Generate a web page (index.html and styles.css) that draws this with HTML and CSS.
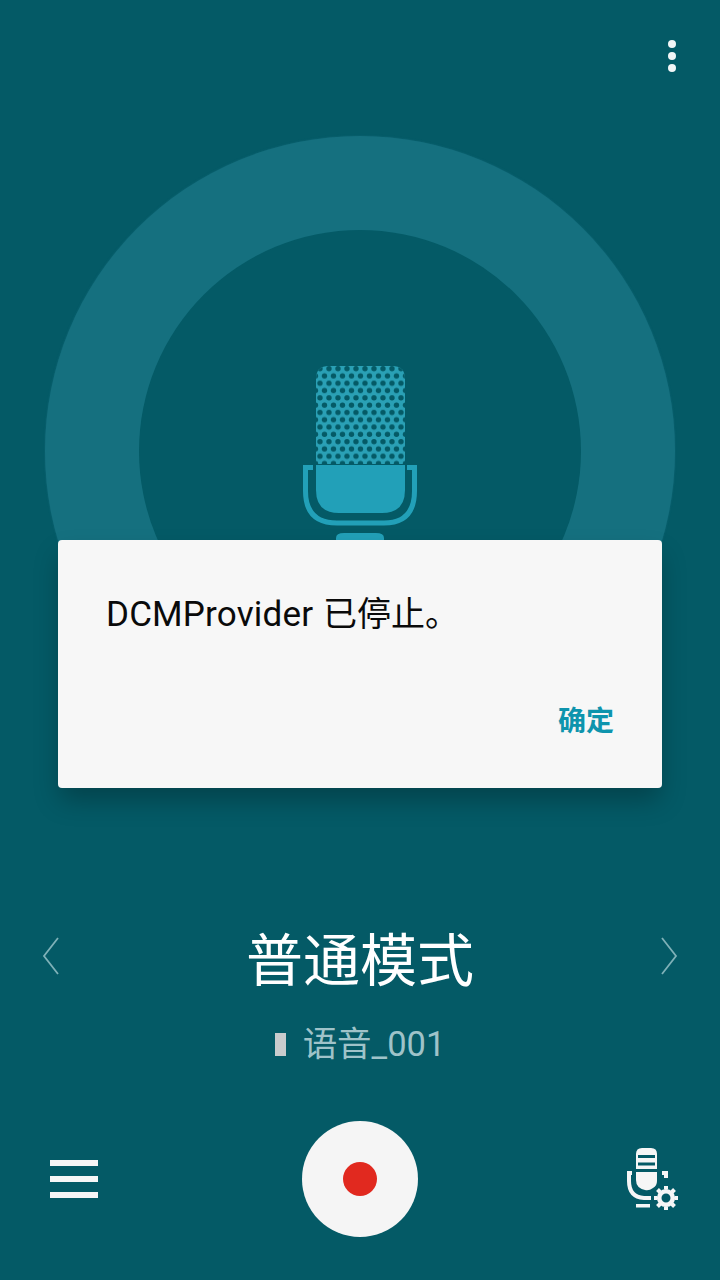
FILE: index.html
```html
<!DOCTYPE html>
<html lang="zh">
<head>
<meta charset="utf-8">
<title>语音备忘录</title>
<link rel="stylesheet" href="styles.css">
</head>
<body>
<div class="screen">
  <header class="topbar">
    <div class="more"><span class="dot"></span><span class="dot"></span><span class="dot"></span></div>
  </header>
  <main class="stage">
    <div class="ring">
      <div class="ring-hole">
        <svg class="mic" width="116" height="176" viewBox="0 0 116 176">
          <defs>
            <pattern id="mesh" x="0" y="0" width="9" height="14.600" patternUnits="userSpaceOnUse">
              <circle cx="0" cy="3.600" r="2.700" fill="#045a66"/>
              <circle cx="9" cy="3.600" r="2.700" fill="#045a66"/>
              <circle cx="4.500" cy="10.900" r="2.700" fill="#045a66"/>
            </pattern>
            <clipPath id="head"><path d="M14 99V14Q14 1 27 1H90Q103 1 103 14V99Z"/></clipPath>
          </defs>
          <path d="M14 99V14Q14 1 27 1H90Q103 1 103 14V99Z" fill="#2aa0b5"/>
          <rect x="14" y="0" width="89" height="99" fill="url(#mesh)" clip-path="url(#head)"/>
          <path d="M14 100H103V125Q103 148 80 148H37Q14 148 14 125Z" fill="#22a0b8"/>
          <path d="M11 102.500H3.500V126Q3.500 158 35 158H82Q112.500 158 112.500 126V102.500H105" fill="none" stroke="#22a0b8" stroke-width="5"/>
          <path d="M34 176V173Q34 168 42 168H74Q82 168 82 173V176Z" fill="#22a0b8"/>
        </svg>
      </div>
    </div>
  </main>
  <section class="mode">
    <svg class="chev" width="18" height="38" viewBox="0 0 18 38"><path d="M16 1L2 19L16 37" fill="none" stroke="#7fb1b8" stroke-width="1.800"/></svg>
    <h1 class="mode-title">普通模式</h1>
    <svg class="chev" width="18" height="38" viewBox="0 0 18 38"><path d="M2 1L16 19L2 37" fill="none" stroke="#7fb1b8" stroke-width="1.800"/></svg>
  </section>
  <section class="file">
    <span class="file-mark"></span>
    <span class="file-name">语音_001</span>
  </section>
  <footer class="controls">
    <div class="burger"><span class="bar"></span><span class="bar"></span><span class="bar"></span></div>
    <div class="record"><span class="record-dot"></span></div>
    <svg class="mic-settings" width="56" height="64" viewBox="0 -1 56 64">
      <path d="M11 6Q11 0 17 0H26Q32 0 32 6V21H11Z" fill="#f6f6f6"/>
      <rect x="13" y="7" width="17" height="3" fill="#045a66"/>
      <rect x="13" y="14.500" width="17" height="3" fill="#045a66"/>
      <path d="M11 24H32V33Q32 38 28 40Q24 43 20 42Q11 40 11 32Z" fill="#f6f6f6"/>
      <path d="M7 25H4V33Q4 49 19 50H26" fill="none" stroke="#f6f6f6" stroke-width="4"/>
      <path d="M37 25H41V30" fill="none" stroke="#f6f6f6" stroke-width="4"/>
      <rect x="11" y="56" width="14" height="3.500" fill="#f6f6f6"/>
      <g transform="translate(41 50)" fill="none" stroke="#f6f6f6">
        <circle r="6.800" stroke-width="4.600"/>
        <path d="M0 -12V-8.500M0 8.500V12M-12 0H-8.500M8.500 0H12M-8.500 -8.500L-6 -6M6 6L8.500 8.500M-8.500 8.500L-6 6M6 -6L8.500 -8.500" stroke-width="4"/>
      </g>
    </svg>
  </footer>
  <div class="dialog">
    <p class="dialog-msg"><span class="msg-latin">DCMProvider</span> <span class="msg-cjk">已停止。</span></p>
    <div class="dialog-actions"><span class="dialog-ok">确定</span></div>
  </div>
</div>
</body>
</html>
```
FILE: styles.css
```css
* { box-sizing: border-box; }
html, body { margin: 0; padding: 0; }
body { background: #045a66; font-family: "Roboto", "Noto Sans CJK SC", sans-serif; }
.screen {
  position: relative;
  width: 720px;
  height: 1280px;
  overflow: hidden;
  display: flex;
  flex-direction: column;
  background: #045a66;
}
.topbar {
  height: 136px;
  display: flex;
  justify-content: flex-end;
  padding: 40px 44px 0 0;
}
.more { display: flex; flex-direction: column; gap: 4px; }
.dot { width: 8px; height: 8px; border-radius: 50%; background: #f2f6f7; }
.stage { display: flex; justify-content: center; height: 630px; }
.ring {
  width: 630px;
  height: 630px;
  border-radius: 50%;
  background: #15707f;
  box-shadow: 0 0 2px #126878;
  display: flex;
  align-items: center;
  justify-content: center;
}
.ring-hole {
  width: 442px;
  height: 442px;
  border-radius: 50%;
  background: #045a66;
  display: flex;
  justify-content: center;
  padding-top: 135px;
}
.mic { display: block; flex: none; }
.mode {
  display: flex;
  align-items: center;
  justify-content: space-between;
  height: 80px;
  margin-top: 150px;
  padding: 0 42px;
}
.chev { display: block; flex: none; }
.mode-title {
  margin: 0;
  font: 400 57px/80px "Noto Sans CJK SC", sans-serif;
  color: #ffffff;
}
.file {
  display: flex;
  align-items: center;
  justify-content: center;
  gap: 17px;
  height: 50px;
  margin-top: 23px;
}
.file-mark { width: 11px; height: 23px; background: #c9cccd; }
.file-name { font-size: 34.500px; line-height: 50px; color: #9fc3c9; }
.controls {
  display: grid;
  grid-template-columns: 1fr auto 1fr;
  align-items: center;
  height: 116px;
  margin-top: 52px;
  padding: 0 39px 0 50px;
}
.burger { display: flex; flex-direction: column; gap: 10px; width: 48px; }
.bar { height: 6px; background: #f6f6f6; }
.record {
  width: 116px;
  height: 116px;
  margin-left: -11px;
  border-radius: 50%;
  background: #f5f5f5;
  display: flex;
  align-items: center;
  justify-content: center;
}
.record-dot { width: 34px; height: 34px; border-radius: 50%; background: #e1291f; }
.mic-settings { justify-self: end; }
.dialog {
  position: absolute;
  left: 58px;
  top: 540px;
  width: 604px;
  height: 248px;
  padding: 52px 48px 0 48px;
  border-radius: 4px;
  background: #f7f7f7;
  box-shadow: 0 14px 26px -2px rgba(0, 0, 0, .26);
}
.dialog-msg { margin: 0; font-size: 35px; line-height: 44px; color: #0a0a0a; }
.msg-latin { letter-spacing: .18px; }
.msg-cjk { font-size: 34px; margin-left: 1px; }
.dialog-actions { display: flex; justify-content: flex-end; margin-top: 62px; }
.dialog-ok {
  font: 700 28px/40px "Noto Sans CJK SC", sans-serif;
  color: #0e94ad;
}
```
